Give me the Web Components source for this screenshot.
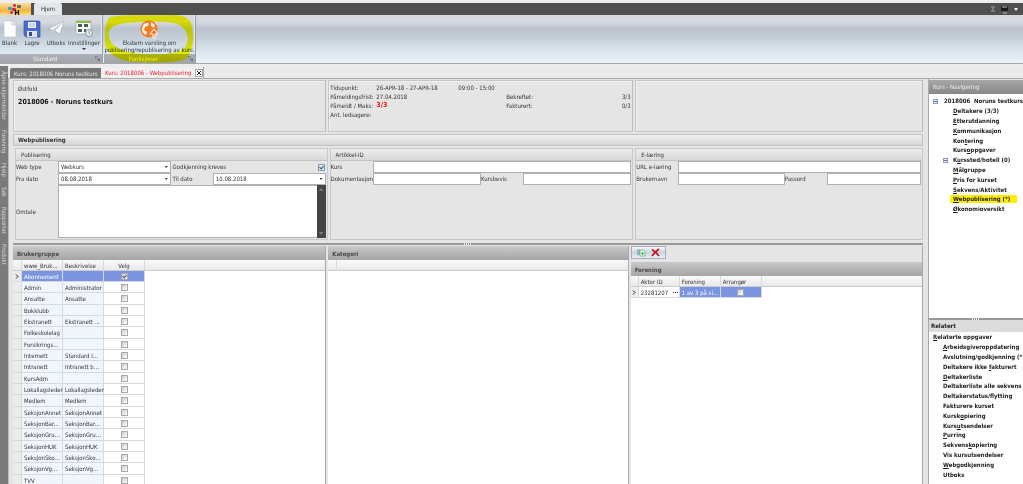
<!DOCTYPE html>
<html lang="no">
<head>
<meta charset="utf-8">
<title>Kurs: 2018006 - Webpublisering</title>
<style>
body{margin:0;height:100vh;overflow:hidden;background:#e5e5e5;color:#333;font:6px/10px "DejaVu Sans Condensed","Liberation Sans",sans-serif}
</style>
</head>
<body>
<course-app></course-app>
<script>
const base = `*{box-sizing:border-box}button,input,select,textarea{font:inherit;color:inherit;margin:0;padding:0;border:0;border-radius:0;background:none}a{color:inherit;text-decoration:none}ul{list-style:none;margin:0;padding:0}`;
const def = (name, css, html) => customElements.define(name, class extends HTMLElement {
  connectedCallback() {
    if (this.shadowRoot) return;
    this.attachShadow({mode: 'open'}).innerHTML =
      `<style>${base}${css}</style>` + (typeof html === 'function' ? html(this) : html);
  }
});
const at = (el, n) => el.getAttribute(n) || '';

/* Ribbon */
def('ribbon-tabs', `
:host{display:flex;height:12px;margin-top:3px;background:#505050;align-items:stretch}
.app{width:31px;background:linear-gradient(#f8dfa8,#f3b341 60%,#ffdc7d);display:flex;justify-content:center}
.tab{margin-left:3px;width:28px;background:#e3e6ea;border-radius:2px 2px 0 0;text-align:center}
.tools{margin-left:auto;display:flex;align-items:center;gap:5px;padding-right:5px;color:#ddd}
.tools svg{display:block}`, `
<button class="app" aria-label="Programmeny"><svg width="18" height="12" viewBox="0 0 18 12"><rect x="1" y="4" width="4" height="3" rx="1" fill="#27a5cf"/><rect x="6" y="1" width="3" height="3" rx="1" fill="#d72d77"/><rect x="5" y="5" width="4" height="3" rx="1" fill="#cf2b2b"/><rect x="10" y="2" width="4" height="3" rx="1" fill="#666"/><rect x="3" y="8" width="3" height="3" rx="1" fill="#bf3f8a"/><path d="M8.500 7v5M8.500 9.500h3M11.500 7v5" stroke="#111" stroke-width="1.300"/><rect x="13" y="6" width="3" height="3" rx="1" fill="#e3c529"/></svg></button>
<button class="tab">Hjem</button>
<div class="tools"><svg width="4" height="6" viewBox="0 0 4 6"><path d="M0 1h4M1 3h2M0 5h4" stroke="#bbb" stroke-width=".8"/></svg>
<svg width="9" height="9" viewBox="0 0 9 9"><rect x="1" y="1" width="7" height="5" rx="1" fill="#1b1b1b"/><path d="M2 2h5" stroke="#ccc"/><path d="M3 8h4" stroke="#bbb"/></svg>
<svg width="4" height="3" viewBox="0 0 4 3"><path d="M0 0h4L2 3z" fill="#fff"/></svg></div>`);

def('ribbon-bar', `
:host{display:flex;gap:1px;height:49px;border-bottom:1px solid #a5a8ab;background:linear-gradient(#d6d9df 0 15%,#bac3ce 28%,#c3ced8 48%,#d7e2eb 70%,#ecf3f8)}`, `<slot></slot>`);

def('ribbon-group', `
:host{display:flex;flex-direction:column;position:relative;border-right:1px solid #999da3;box-shadow:inset -1px 0 #e8edf2}
.items{display:flex;flex:1;justify-content:center}
:host(.std) .items{justify-content:flex-start}
footer{height:9px;background:linear-gradient(#adb1b7,#a0a5aa);color:#f4f4f4;text-align:center;line-height:9px;position:relative}
:host(.g2) footer{padding-right:12px}
:host(.std) footer{padding-right:12px}
footer svg{position:absolute;right:2px;top:2px}`, el => `
<div class="items"><slot></slot></div>
<footer>${at(el, 'label')}<svg width="5" height="5" viewBox="0 0 5 5"><path d="M0 3V0h3M2 2l3 3M5 2v3H2" fill="none" stroke="#555" stroke-width=".8"/></svg></footer>
<slot name="mark"></slot>`);

def('ribbon-button', `
:host{display:block}
button{display:flex;flex-direction:column;align-items:center;width:100%;padding-top:4px;line-height:7px;color:#2d3542;white-space:nowrap}
.icon{height:20px}
.drop{width:4px;height:2px;background:#333;clip-path:polygon(0 0,100% 0,50% 100%);margin-top:2px}`, el => `
<button><span class="icon"><slot></slot></span><span>${at(el, 'label').replace('|', '<br>')}</span>${el.hasAttribute('drop') ? '<i class="drop"></i>' : ''}</button>`);

/* Side strip with rotated captions */
def('side-strip', `
:host{display:flex;flex-direction:column;align-items:center;gap:10px;width:8px;flex:none;padding-top:5px;background:#7b7b7b;color:#d9d9d9}
button{writing-mode:vertical-rl;line-height:8px}`,
['Åpne skjermbilder','Forening','Hjelp','Søk','Rapporter','Produkt'].map(t => `<button>${t}</button>`).join(''));

def('doc-tabs', `
:host{display:flex;align-items:flex-end;height:13px;padding-left:2px;background:#ebebec;border-bottom:1px solid #aaa}
button{height:10px;line-height:9px;padding:0 4px;white-space:nowrap}
.off{width:91px;background:#767676;color:#e8e8e8;border-radius:2px 0 0 0}
.on{color:#e92434}
.tab{display:flex;align-items:center;width:103px;justify-content:space-between;border-right:1px solid #aaa;height:11px;background:#f0f0f0}
.x{width:8px;height:8px;padding:0;border:1px solid #aaa;margin-right:4px;background:#fff}
svg{display:block}`, `
<button class="off">Kurs: 2018006 Noruns testkurs</button>
<div class="tab"><button class="on">Kurs: 2018006 - Webpublisering</button><button class="x" aria-label="Lukk"><svg width="6" height="6" viewBox="0 0 6 6"><path d="M1 1l4 4M5 1L1 5" stroke="#222"/></svg></button></div>`);

/* Layout helpers */
def('tri-row', `
:host{display:grid;grid-template-columns:314fr 305fr 289fr;gap:2px}`, `<slot></slot>`);
def('info-box', `:host{display:block;height:52px;padding:3px 4px;border:1px solid #c6c6c6;border-right-color:#bbb;box-shadow:inset 1px 1px #f0f0f0}`, `<slot></slot>`);

def('course-title', `:host{display:block}p,h1{margin:0}h1{font-size:7px;line-height:10px;color:#111;margin-top:3px}`,
`<p>Østfold</p><h1>2018006 - Noruns testkurs</h1>`);

def('course-facts', `
:host{display:block;margin:-1px -3px}
dl{display:grid;grid-template-columns:46px 82px 1fr 20px;margin:0;line-height:9px}
dt,dd{margin:0;white-space:nowrap}
.r{text-align:right}
.wide{grid-column:span 2}
dt.b{padding-left:48px}
.red{color:#e11;font-weight:bold;font-size:7px}`, `
<dl><dt>Tidspunkt:</dt><dd>26-APR-18 - 27-APR-18</dd><dd class="wide">09:00 - 15:00</dd>
<dt>Påmeldingsfrist:</dt><dd>27.04.2018</dd><dt class="b">Bekreftet:</dt><dd class="r">3/3</dd>
<dt>Påmeldt / Maks:</dt><dd class="red">3/3</dd><dt class="b">Fakturert:</dt><dd class="r">0/3</dd>
<dt>Ant. ledsagere:</dt><dd></dd></dl>`);

def('section-bar', `
:host{display:block;height:12px;flex:none;padding:0 4px;border:1px solid #c2c2c2;background:linear-gradient(#efefef,#d6d6d6);font-weight:bold}
:host([dark]){border:0;height:14px;line-height:15px;background:linear-gradient(#c9c9c9,#a4a4a4);color:#4a4a4a}
:host([side]){border:0;height:12px;line-height:12px;padding-left:2px;background:#dcdcdc;color:#222}
:host([head]){border:0;height:14px;line-height:14px;background:linear-gradient(#a6a6a6,#888);color:#eee;font-weight:normal}`, `<slot></slot>`);

def('group-box', `
:host{display:block;border:1px solid #c8c8c8}
h2{margin:0;font:inherit;height:12px;line-height:12px;padding-left:5px;background:linear-gradient(#ededed,#d9d9d9);border-bottom:1px solid #c4c4c4}
div{padding:0 1px 1px 0}`, el => `<h2>${at(el, 'label')}</h2><div><slot></slot></div>`);

def('field-row', `:host{display:flex;height:12px}:host([tall]){height:53px}`, `<slot></slot>`);

def('form-field', `
:host{display:flex;align-items:center;flex:1 1 0;min-width:0}
:host([wide]){flex-grow:12}
:host([narrow]){flex-grow:11}
label{width:42px;flex:none;white-space:nowrap;line-height:10px;color:#333}
:host([long]) label{width:auto;flex:1}
.c{flex:1;align-self:stretch;min-width:0;position:relative;display:flex;background:#fff;border:1px solid #b0b0b0}
input,select,textarea{width:100%;padding:0 2px;line-height:10px;appearance:none;resize:none;outline:0;overflow:hidden}
.a:after{content:"";position:absolute;right:2px;top:4px;width:3px;height:2px;background:#333;clip-path:polygon(0 0,100% 0,50% 100%)}
input[type=checkbox]{width:7px;height:7px;padding:0;margin-right:1px;flex:none;border:1px solid #8d99ad;background:#dce6f5;position:relative}
input[type=checkbox]:checked:after{content:"";position:absolute;left:1px;top:0;width:2px;height:3px;border:solid #334e86;border-width:0 1px 1px 0;transform:rotate(40deg)}
.bar{flex:none;width:9px;background:#444;display:flex;flex-direction:column;justify-content:space-between;align-items:center;padding:3px 0;margin:-1px}
.bar i{width:5px;height:3px;background:#777;clip-path:polygon(50% 0,100% 100%,0 100%)}
.bar i+i{clip-path:polygon(0 0,100% 0,50% 100%)}`, el => {
  const kind = at(el, 'kind'), v = at(el, 'value');
  const label = `<label for="f">${at(el, 'label')}</label>`;
  if (kind === 'check') return label + '<input id="f" type="checkbox" checked>';
  if (kind === 'select') return label + `<span class="c a"><select id="f"><option>${v}</option></select></span>`;
  if (kind === 'area') return label + '<span class="c"><textarea id="f"></textarea><span class="bar"><i></i><i></i></span></span>';
  return label + `<span class="c"><input id="f" type="${kind || 'text'}" value="${v}"></span>`;
});

def('split-line', `
:host{display:flex;flex:none;justify-content:center;align-items:center;height:2px;background:#999}
i{width:8px;height:2px;background:repeating-linear-gradient(90deg,#eee 0 1px,#888 1px 2px)}`, `<i></i>`);

/* Tables */
const gridCss = `
:host{display:block;flex:1;background:#fff;overflow:hidden;min-height:0}
.head{background:linear-gradient(#fafafa,#e9e9e9);border-bottom:1px solid #ccc;height:11px}
table{border-collapse:separate;border-spacing:0;table-layout:fixed;width:132px;margin-top:-11px}
tr{height:11px}
tbody tr:nth-child(3n){height:12px}
th,td{padding:0 0 0 2px;font-weight:normal;text-align:left;line-height:9px;white-space:nowrap;border-right:1px solid #d5d9e0;border-bottom:1px solid #d5d9e0}
th{border-bottom-color:#ccc}
tbody td:nth-child(2),tbody td:nth-child(3){background:#f1f6fd}
td:first-child{background:#ececec;padding:0;text-align:center}
td:first-child svg{display:block;margin:0 auto}
col:first-child{width:9px}
th.m,td.m{text-align:center;padding:0}
tbody tr td.s{background:#7b94df;color:#fff}
input{appearance:none;display:block;margin:0 auto;width:7px;height:7px;border:1px solid #a8a8a8;background:linear-gradient(135deg,#ccc,#fff);position:relative}
input:checked:after{content:"";position:absolute;left:1px;top:0;width:2px;height:3px;border:solid #334e86;border-width:0 1px 1px 0;transform:rotate(40deg)}`;
const pointer = '<svg width="4" height="5" viewBox="0 0 4 5"><path d="M1 .5l2 2-2 2" fill="none" stroke="#222"/></svg>';

const groups = [['Abonnement',''],['Admin','Administrator'],['Ansatte','Ansatte'],['Bokklubb',''],['Ekstranett','Ekstranett ...'],['Folkeskolelag',''],['Forsikrings...',''],['Internett','Standard I...'],['Intranett','Intranett b...'],['KursAdm',''],['Lokallagsleder','Lokallagsleder'],['Medlem','Medlem'],['SeksjonAnnet','SeksjonAnnet'],['SeksjonBar...','SeksjonBar...'],['SeksjonGru...','SeksjonGru...'],['SeksjonHUK','SeksjonHUK'],['SeksjonSko...','SeksjonSko...'],['SeksjonVg...','SeksjonVg...'],['TVV','']];
def('user-groups', gridCss, `
<div class="head"></div><table><colgroup><col><col><col><col></colgroup>
<thead><tr><th></th><th>www_Bruk...</th><th>Beskrivelse</th><th class="m">Velg</th></tr></thead>
<tbody>${groups.map(([a, b], i) => { const s = i ? '' : 's'; return `<tr><td>${i ? '' : pointer}</td><td class="${s}">${a}</td><td class="${s}">${b}</td><td class="m ${s}"><input type="checkbox" aria-label="${a}"${i ? '' : ' checked'}></td></tr>`; }).join('')}</tbody></table>`);
def('category-list', gridCss + 'table{width:9px}', `<div class="head"></div><table><colgroup><col></colgroup><thead><tr><th></th></tr></thead></table>`);
def('club-list', gridCss + `table{width:131px}col:first-child{width:8px}tbody tr td:nth-child(2){background:#fff}.id{display:flex;align-items:center;justify-content:space-between}
button{display:flex;gap:1px;padding:3px 1px 3px 0}button i{width:1px;height:1px;background:#222}`, `
<div class="head"></div><table><colgroup><col><col><col><col></colgroup>
<thead><tr><th></th><th>Aktor ID</th><th>Forening</th><th>Arrangør</th></tr></thead>
<tbody><tr><td>${pointer}</td><td><span class="id">23281207 <button aria-label="Velg aktor"><i></i><i></i><i></i></button></span></td><td class="s">1 av 3 på si...</td><td class="m s"><input type="checkbox" aria-label="Arrangør"></td></tr></tbody></table>`);

def('grid-pane', `:host{display:flex;flex-direction:column;min-width:0;min-height:0;border-right:1px solid #aaa}`, `<slot></slot>`);
def('grid-area', `:host{display:grid;grid-template-columns:314fr 301fr 293fr;grid-template-rows:minmax(0,1fr);gap:2px;flex:1;min-height:0;margin-top:1px}`, `<slot></slot>`);

def('club-tools', `
:host{display:flex;flex:none;align-self:flex-start;width:35px;height:13px;margin-bottom:3px;border:1px solid #aab;background:linear-gradient(#f4f8fb,#c8d4df 50%,#eaf1f6);justify-content:space-evenly;align-items:center}
svg{display:block}`, `
<button aria-label="Ny"><svg width="10" height="9" viewBox="0 0 10 9"><path d="M1 2h3M1 4h3M1 6h3" stroke="#4a7a8c" stroke-width=".8"/><path d="M4 2h4l1 2v4H4z" fill="#e8fbe8" stroke="#5fae70" stroke-width=".7"/><path d="M6.500 4v3M5 5.500h3" stroke="#23b044" stroke-width=".8"/></svg></button>
<button aria-label="Slett"><svg width="9" height="9" viewBox="0 0 9 9"><path d="M1 1.500Q5 4 8 8M8 1Q4 4 1 8" fill="none" stroke="#c3121c" stroke-width="1.600"/></svg></button>`);

/* Navigation: an underscore precedes the access key */
const key = t => t.replace(/_(.)/, '<u>$1</u>');
const navCss = `
:host{display:block;background:#fff;color:#222;font-weight:bold;overflow:hidden;white-space:nowrap}
li{height:10px;padding-left:24px;display:flex;align-items:center}
li:nth-child(5n){height:9px}
li.root{padding-left:4px}
u{text-underline-offset:1px;text-decoration-thickness:1px}
i{width:5px;height:5px;border:1px solid #8b9bc4;background:linear-gradient(#5b6ea8,#5b6ea8) center/3px 1px no-repeat #eef;flex:none}`;
def('course-nav', navCss + `:host{flex:none;height:224px;padding-top:2px}.root i{margin-right:6px}li.sub{padding-left:14px}.sub i{margin-right:5px}.hit a{background:#ffee00;line-height:8px;margin-left:-3px;padding:0 7px 0 3px;border-radius:1px}`, `<ul>
<li class="root"><i></i><a href="#">2018006&nbsp; Noruns testkurs</a></li>${
['_Deltakere (3/3)','_Etterutdanning','_Kommunikasjon','Kon_tering','Kurs_oppgaver','K_urssted/hotell (0)','_Målgruppe','_Pris for kurset','_Sekvens/Aktivitet','_Webpublisering (*)','_Økonomioversikt']
.map((t, i) => `<li class="${i === 5 ? 'sub' : i === 9 ? 'hit' : ''}">${i === 5 ? '<i></i>' : ''}<a href="#">${key(t)}</a></li>`).join('')}</ul>`);
def('related-nav', navCss + `:host{flex:1}li{padding-left:14px}`, `<ul><li class="root"><a href="#"><u>R</u>elaterte oppgaver</a></li>${
['_Arbeidsgiveroppdatering','Avslutning/godkjenning (*','Deltakere ikke _fakturert','_Deltakerliste','Deltakerliste alle sekvens','Deltakerstatus/flytting','Fakturere kurset','Kursk_opiering','Kurs_utsendelser','_Purring','Sekvens_kopiering','Vis kursutsendelser','_Webgodkjenning','Utboks']
.map(t => `<li><a href="#">${key(t)}</a></li>`).join('')}</ul>`);

def('course-app', `
:host{display:flex;flex-direction:column;height:100vh;background:#eeeeef}
.work{display:flex;flex:1;min-height:0;padding-top:2px}
.doc{flex:1;min-width:0;display:flex;flex-direction:column}
.cols{display:flex;flex:1;min-height:0;background:#e5e5e5}
main{flex:1;min-width:0;display:flex;flex-direction:column;padding:1px 3px 0 4px;border-left:1px solid #bbb}
aside{width:95px;flex:none;display:flex;flex-direction:column;margin-left:2px;border-left:1px solid #aaa;padding-top:1px}
main>section-bar{margin:2px 0}
.form{margin:0 0 3px 2px}
.form>*{min-height:90px}
.mark{position:absolute;left:0;top:0;mix-blend-mode:multiply}
.b1{width:19px}.b2{width:26px}.b3{width:22px}.b4{width:34px}
.g1{width:103px}.g2{width:92px}
svg{display:block}`, `
<ribbon-tabs></ribbon-tabs>
<ribbon-bar>
<ribbon-group class="g1 std" label="Standard">
<ribbon-button class="b1" label="Blank"><svg width="16" height="20" viewBox="0 0 16 20"><path d="M2 2h8l4 4v12H2z" fill="#fff" stroke="#c2c7cd" stroke-width=".7"/><path d="M10 2v4h4" fill="#e4e8ed" stroke="#c2c7cd" stroke-width=".7"/></svg></ribbon-button>
<ribbon-button class="b2" label="Lagre"><svg width="18" height="20" viewBox="0 0 18 20"><path d="M1 2h15l1 1v15H3l-2-2z" fill="#4c6dcb" stroke="#3652a3" stroke-width=".7"/><path d="M5 3h8v6H5z" fill="#eaf0fb"/><path d="M6 5h6M6 7h6" stroke="#9db1de" stroke-width=".7"/><path d="M4 12h10v6H4z" fill="#dfe4ef"/><path d="M6 13h3v4H6z" fill="#38488a"/></svg></ribbon-button>
<ribbon-button class="b3" label="Utboks"><svg width="18" height="20" viewBox="0 0 18 20"><path d="M1 10L17 2l-4 13-5-3-2 5-1-6z" fill="#fdfdfd" stroke="#9da5b1" stroke-width=".6"/><path d="M17 2L5 11l1 6 2-5z" fill="#c3cad4"/></svg></ribbon-button>
<ribbon-button class="b4" label="Innstillinger" drop><svg width="20" height="20" viewBox="0 0 20 20"><rect x="2" y="2" width="15" height="13" rx="1" fill="#f7f8f8" stroke="#929aa0" stroke-width=".6"/><path d="M2 3h15" stroke="#8bc53f" stroke-width="2"/><path d="M4 5h4v3H4zM10 5h4v3h-4zM4 10h4v3H4zM10 10h2v3h-2z" fill="#4f5a55"/><circle cx="15" cy="14" r="3.500" fill="#e4e8eb" stroke="#8a949c"/><path d="M15 12v2l1 1" fill="none" stroke="#68737c" stroke-width=".7"/></svg></ribbon-button>
</ribbon-group>
<ribbon-group class="g2" label="Funksjoner">
<ribbon-button label="Ekstern varsling om|publisering/republisering av kurs."><svg width="20" height="20" viewBox="0 0 20 20"><circle cx="10" cy="10" r="8.500" fill="#f47a20"/><path d="M4 6q3-3 6-2l-1 3-3 1-1 3 3 2-1 3q-4-2-4-6zM12 3l4 3-1 3-3-2z" fill="#fff3e7"/><path d="M14 19v-4h-3l4-5 4 5h-3v4z" fill="#f47a20" stroke="#fff" stroke-width="1"/></svg></ribbon-button>
<svg class="mark" slot="mark" width="92" height="49" viewBox="0 0 92 49"><path fill="#ffff08" fill-rule="evenodd" d="M6 2C25-1 45 1 67 0C82 0 88 4 88 14C91 27 87 38 82 44C72 48 55 48 35 47C19 48 7 41 2 33C0 24 0 8 6 2ZM23 8C9 9 3 14 5 22C7 32 20 38 40 39C58 40 78 39 82 31C86 22 83 11 70 8C55 6 39 6 23 8Z"/></svg>
</ribbon-group>
</ribbon-bar>
<div class="work">
<side-strip></side-strip>
<div class="doc">
<doc-tabs></doc-tabs>
<div class="cols">
<main>
<tri-row><info-box><course-title></course-title></info-box><info-box><course-facts></course-facts></info-box><info-box></info-box></tri-row>
<section-bar>Webpublisering</section-bar>
<tri-row class="form">
<group-box label="Publisering">
<field-row><form-field kind="select" label="Web type" value="Webkurs"></form-field><form-field long kind="check" label="&nbsp;Godkjenning kreves"></form-field></field-row>
<field-row><form-field kind="select" label="Fra dato" value="08.08.2018"></form-field><form-field kind="select" label="&nbsp;Til dato" value="10.08.2018"></form-field></field-row>
<field-row tall><form-field kind="area" label="Omtale"></form-field></field-row>
</group-box>
<group-box label="Artikkel-ID">
<field-row><form-field label="Kurs"></form-field></field-row>
<field-row><form-field label="Dokumentasjon"></form-field><form-field label="Kursbevis"></form-field></field-row>
</group-box>
<group-box label="E-læring">
<field-row><form-field label="URL e-læring"></form-field></field-row>
<field-row><form-field wide label="Brukernavn"></form-field><form-field narrow kind="password" label="Passord"></form-field></field-row>
</group-box>
</tri-row>
<split-line></split-line>
<grid-area>
<grid-pane><section-bar dark>Brukergruppe</section-bar><user-groups></user-groups></grid-pane>
<grid-pane><section-bar dark>Kategori</section-bar><category-list></category-list></grid-pane>
<grid-pane><club-tools></club-tools><section-bar dark>Forening</section-bar><club-list></club-list></grid-pane>
</grid-area>
</main>
<aside><section-bar head>Kurs - Navigering</section-bar><course-nav></course-nav><split-line></split-line><section-bar side>Relatert</section-bar><related-nav></related-nav></aside>
</div>
</div>
</div>`);
</script>
</body>
</html>
